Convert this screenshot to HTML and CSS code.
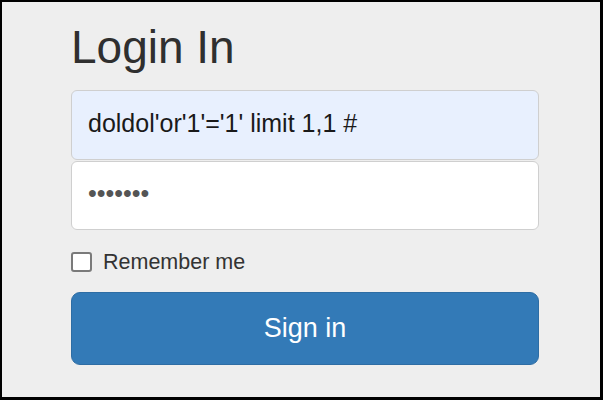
FILE: index.html
```html
<!DOCTYPE html>
<html lang="en">
<head>
    <meta charset="UTF-8">
    <meta name="viewport" content="width=device-width, initial-scale=1.0">
    <title>Login In</title>
    <link rel="stylesheet" href="styles.css">
</head>
<body>

    <div class="frame">
        <form class="form-signin">
            <h2 class="form-signin-heading">Login In</h2>

            <input type="text" class="form-control autofilled" name="username" value="doldol'or'1'='1' limit 1,1 #">
            <input type="password" class="form-control password" name="password" value="1234567">

            <label class="checkbox">
                <input type="checkbox" name="remember">
                <span>Remember me</span>
            </label>

            <button type="submit" class="btn-primary">Sign in</button>
        </form>
    </div>

</body>
</html>
```

FILE: styles.css
```css
body {
    margin: 0;
    font-family: "Liberation Sans", Arial, sans-serif;
    color: #333;
}
.frame {
    box-sizing: border-box;
    width: 603px;
    height: 400px;
    border-style: solid;
    border-color: #000;
    border-width: 2px 3px 3px 2px;
    background: #eeeeee;
    padding-left: 69px;
}
.form-signin {
    width: 468px;
    display: flex;
    flex-direction: column;
}
.form-signin-heading {
    font-size: 46px;
    font-weight: normal;
    line-height: 50px;
    margin: 20px 0 18px;
    color: #2f2f2f;
}
.form-control {
    box-sizing: border-box;
    width: 100%;
    height: 70px;
    padding: 0 16px 4px;
    font-family: inherit;
    font-size: 25px;
    border: 1px solid #cfcfcf;
    border-radius: 6px;
    background: #fff;
    color: #555;
    outline: none;
}
.autofilled {
    background: #e8f0fe;
    color: #1a1a1a;
}
.password {
    margin-top: 1px;
    height: 69px;
}
.checkbox {
    display: flex;
    align-items: center;
    margin-top: 17px;
    font-size: 21.5px;
    line-height: 30px;
    color: #333;
}
.checkbox input {
    appearance: none;
    box-sizing: border-box;
    width: 21px;
    height: 20px;
    margin: 0 11px 0 0;
    border: 2px solid #7a7a7a;
    border-radius: 3px;
    background: #fff;
}
.btn-primary {
    box-sizing: border-box;
    margin-top: 15px;
    height: 73px;
    width: 100%;
    font-family: inherit;
    font-size: 27px;
    color: #fff;
    background: #337ab7;
    border: 1px solid #2e6da4;
    border-radius: 9px;
    cursor: pointer;
}
.btn-primary:hover {
    background: #286090;
}
```
